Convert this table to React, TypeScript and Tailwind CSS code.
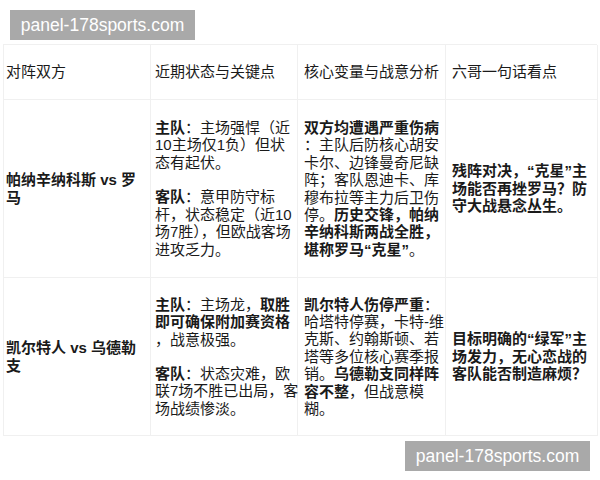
import React from 'react';

// 每一行按截图手动断行
type Seg = { t: string; b?: boolean };
type Line = Seg[];

const font = { fontFamily: '"Liberation Sans", "Noto Sans CJK SC", sans-serif' };

const rows: { team: string[]; state: Line[][]; core: Line[]; note: string[] }[] = [
  {
    team: ['帕纳辛纳科斯 vs 罗', '马'],
    state: [
      [
        [{ t: '主队', b: true }, { t: '：主场强悍（近' }],
        [{ t: '10主场仅1负）但状' }],
        [{ t: '态有起伏。' }],
      ],
      [
        [{ t: '客队', b: true }, { t: '：意甲防守标' }],
        [{ t: '杆，状态稳定（近10' }],
        [{ t: '场7胜），但欧战客场' }],
        [{ t: '进攻乏力。' }],
      ],
    ],
    core: [
      [{ t: '双方均遭遇严重伤病', b: true }],
      [{ t: '：主队后防核心胡安' }],
      [{ t: '卡尔、边锋曼奇尼缺' }],
      [{ t: '阵；客队恩迪卡、库' }],
      [{ t: '穆布拉等主力后卫伤' }],
      [{ t: '停。' }, { t: '历史交锋，帕纳', b: true }],
      [{ t: '辛纳科斯两战全胜，', b: true }],
      [{ t: '堪称罗马“克星”', b: true }, { t: '。' }],
    ],
    note: ['残阵对决，“克星”主', '场能否再挫罗马？防', '守大战悬念丛生。'],
  },
  {
    team: ['凯尔特人 vs 乌德勒', '支'],
    state: [
      [
        [{ t: '主队', b: true }, { t: '：主场龙，' }, { t: '取胜', b: true }],
        [{ t: '即可确保附加赛资格', b: true }],
        [{ t: '，战意极强。' }],
      ],
      [
        [{ t: '客队', b: true }, { t: '：状态灾难，欧' }],
        [{ t: '联7场不胜已出局，客' }],
        [{ t: '场战绩惨淡。' }],
      ],
    ],
    core: [
      [{ t: '凯尔特人伤停严重', b: true }, { t: '：' }],
      [{ t: '哈塔特停赛，卡特-维' }],
      [{ t: '克斯、约翰斯顿、若' }],
      [{ t: '塔等多位核心赛季报' }],
      [{ t: '销。' }, { t: '乌德勒支同样阵', b: true }],
      [{ t: '容不整', b: true }, { t: '，但战意模' }],
      [{ t: '糊。' }],
    ],
    note: ['目标明确的“绿军”主', '场发力，无心恋战的', '客队能否制造麻烦？'],
  },
];

function Lines({ lines }: { lines: Line[] }) {
  return (
    <div>
      {lines.map((line, i) => (
        <div key={i} className="whitespace-nowrap">
          {line.map((s, j) => (
            <span key={j} className={s.b ? 'font-bold' : ''}>
              {s.t}
            </span>
          ))}
        </div>
      ))}
    </div>
  );
}

function Watermark() {
  return (
    <div className="w-[185px] h-[30px] bg-[#a9a9a9] text-white text-[17.5px] flex items-center justify-center" style={font}>
      panel-178sports.com
    </div>
  );
}

export default function App() {
  const cell = 'flex items-center border-r border-b border-[#f0f0f0]';
  return (
    <div className="w-[600px] h-[480px] bg-white text-[#1a1a1a] overflow-hidden" style={font}>
      <div className="pt-[10px] pl-[10px]">
        <Watermark />
      </div>

      {/* 表格 */}
      <div className="ml-[3px] mt-[4px] w-[594px] grid grid-cols-[147px_147px_148px_152px] grid-rows-[55px_178px_158px] border-t border-l border-[#f0f0f0] text-[15px] leading-[17.4px]">
        <div className={`${cell} pl-[2px]`}>对阵双方</div>
        <div className={`${cell} pl-[4px]`}>近期状态与关键点</div>
        <div className={`${cell} pl-[6px]`}>核心变量与战意分析</div>
        <div className={`${cell} pl-[6px]`}>六哥一句话看点</div>

        {rows.map((r, i) => (
          <React.Fragment key={i}>
            <div className={`${cell} pl-[2px] font-bold`}>
              <div>
                {r.team.map((t, k) => (
                  <div key={k} className="whitespace-nowrap">{t}</div>
                ))}
              </div>
            </div>
            <div className={`${cell} pl-[4px]`}>
              <div className="flex flex-col gap-[17px]">
                {r.state.map((p, k) => (
                  <Lines key={k} lines={p} />
                ))}
              </div>
            </div>
            <div className={`${cell} pl-[6px]`}>
              <Lines lines={r.core} />
            </div>
            <div className={`${cell} pl-[6px] font-bold`}>
              <div>
                {r.note.map((t, k) => (
                  <div key={k} className="whitespace-nowrap">{t}</div>
                ))}
              </div>
            </div>
          </React.Fragment>
        ))}
      </div>

      <div className="flex justify-end pr-[10px] mt-[5px]">
        <Watermark />
      </div>
    </div>
  );
}
